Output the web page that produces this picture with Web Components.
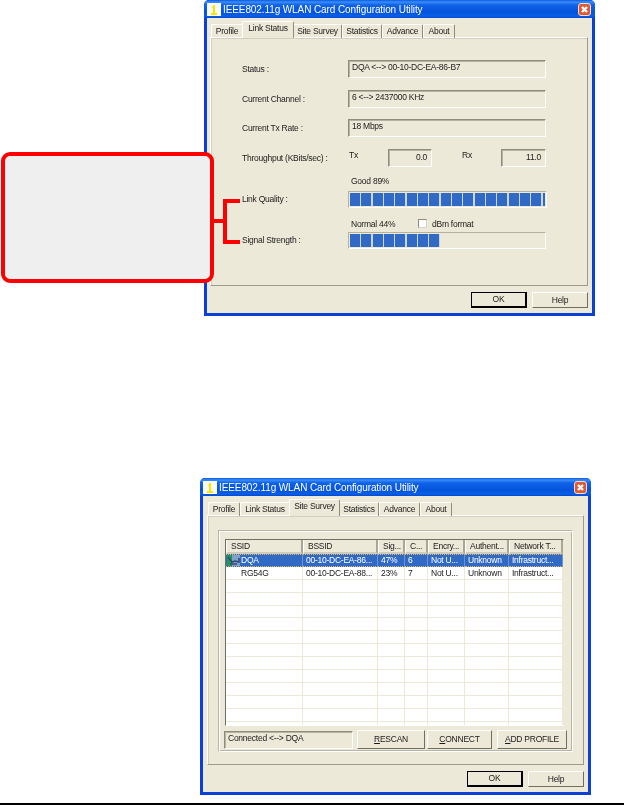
<!DOCTYPE html>
<html>
<head>
<meta charset="utf-8">
<title>WLAN utility</title>
<style>
  html, body { margin: 0; background: #fff; }
  body { width: 624px; height: 805px; position: relative; overflow: hidden; font: 8.5px "Liberation Sans", sans-serif; letter-spacing: -.25px; color: #1c1c1c; }
  xp-window.link { position: absolute; left: 204px; top: 0; width: 391px; height: 316px; --pl: 3px; }
  xp-window.survey { position: absolute; left: 200px; top: 478px; width: 391px; height: 317px; --pl: 4px; }
  call-out { position: absolute; left: 1px; top: 152px; }
  page-rule { position: absolute; left: 0; right: 0; top: 803px; }
</style>
</head>
<body>

<xp-window class="link" active="1">
  <link-status></link-status>
</xp-window>

<call-out></call-out>

<xp-window class="survey" active="2">
  <site-survey></site-survey>
</xp-window>

<page-rule></page-rule>

<template id="xp-window-tpl">
<style>
  :host { display: block; box-sizing: border-box; filter: blur(.3px); }
  .frame { height: 100%; box-sizing: border-box; display: flex; flex-direction: column; background: #0a3fd8; border-radius: 5px 5px 0 0; padding: 0 3px 3px; }
  .title { height: 18px; margin: 0 -3px; padding: 0 4px 0 3px; flex: none; display: flex; align-items: center; gap: 2px; color: #fff; border-radius: 5px 5px 0 0;
    background: linear-gradient(#0a5be0 0, #3b8cf8 2px, #0f62e8 5px, #0553dc 12px, #0a5fe6 16px, #0048d0 18px);
    font: 10px "Liberation Sans", sans-serif; letter-spacing: -.1px; }
  .title svg { flex: none; }
  .title span { flex: 1; white-space: nowrap; margin-top: 1px; }
  .client { flex: 1; min-height: 0; background: #ece9d8; display: flex; flex-direction: column; padding: 5px 4px 5px var(--pl); }
  .panel { flex: 1; min-height: 0; box-sizing: border-box; border: 1px solid; border-color: #fff #9d9a8a #9d9a8a #fff; box-shadow: 1px 1px 0 #d2cfbe inset; }
  .foot { flex: none; display: flex; justify-content: flex-end; gap: 5px; padding-top: 6px; }
</style>
<div class="frame">
  <div class="title">
    <svg width="14" height="13" viewBox="0 0 14 13"><rect width="14" height="13" fill="#fbfbf4"/><path d="M6 2h2v8h2v2H4v-2h2V5H5V4h1z" fill="#f7e600"/></svg>
    <span>IEEE802.11g WLAN Card Configuration Utility</span>
    <svg width="13" height="13" viewBox="0 0 13 13"><rect x=".5" y=".5" width="12" height="12" rx="2.5" fill="#dc5a35" stroke="#f3dcd2"/><path d="M4 4l5 5M9 4l-5 5" stroke="#fff" stroke-width="2.4"/></svg>
  </div>
  <div class="client">
    <xp-tabs></xp-tabs>
    <div class="panel"><slot></slot></div>
    <div class="foot">
      <xp-button def w="56">OK</xp-button>
      <xp-button w="56">Help</xp-button>
    </div>
  </div>
</div>
</template>

<template id="xp-tabs-tpl">
<style>
  :host { display: flex; height: 15px; flex: none; align-items: flex-end; padding-left: 1px; position: relative; z-index: 1; margin-bottom: -1px; }
  .tab { box-sizing: border-box; height: 14px; text-align: center; line-height: 12px; white-space: nowrap; border: 1px solid; border-color: #fff #8f8c7c transparent #fff; border-bottom: 0; border-radius: 2px 2px 0 0; }
  .tab.on { height: 17px; margin: 0 -1px; background: #ece9d8; line-height: 13px; padding-bottom: 3px; position: relative; z-index: 1; }
</style>
</template>

<template id="xp-button-tpl">
<style>
  :host { display: block; box-sizing: border-box; height: 16px; background: #ece9d8; border: 1px solid; border-color: #fff #716f64 #716f64 #fff; text-align: center; line-height: 14px; white-space: nowrap; flex: none; }
  :host([def]) { border: 1px solid #000; border-right-width: 2px; border-bottom-width: 2px; line-height: 13px; }
  :host([tall]) { height: 19px; line-height: 17px; }
</style>
<slot></slot>
</template>

<template id="sunken-box-tpl">
<style>
  :host { display: block; box-sizing: border-box; height: 18px; border: 1px solid; border-color: #8f8c7c #fff #fff #8f8c7c; box-shadow: 1px 1px 0 #b6b3a3 inset; padding: 0 3px; line-height: 12px; white-space: nowrap; }
  :host([num]) { text-align: right; padding-right: 4px; line-height: 15px; }
</style>
<slot></slot>
</template>

<template id="chunk-bar-tpl">
<style>
  :host { display: block; box-sizing: border-box; height: 17px; padding: 1px; border: 1px solid; border-color: #b4b1a1 #fff #fff #b4b1a1; }
  .fill { height: 100%; background: repeating-linear-gradient(90deg, #316ac5 0 10px, #cdd5e0 10px 11.33px); }
</style>
<div class="fill"></div>
</template>

<template id="link-status-tpl">
<style>
  :host { display: block; padding: 22px 41px 0 31px; }
  .top { display: flex; flex-direction: column; gap: 11.5px; }
  .row { display: grid; grid-template-columns: 106px 1fr; align-items: center; height: 18px; white-space: nowrap; }
  .tp { display: grid; grid-template-columns: 40px 44px 29px 40px 45px; }
  .tp span { line-height: 12px; padding-left: 1px; }
  .cap { margin-left: 109px; height: 11px; line-height: 11px; }
  .cap.first { margin-top: 9px; margin-bottom: 4px; }
  .cap.second { margin-top: 11px; margin-bottom: 2px; display: flex; }
  .cap i { font-style: normal; width: 67px; }
  .box { width: 9px; height: 9px; box-sizing: border-box; background: #fff; border: 1px solid; border-color: #8f8c7c #d8d5c6 #d8d5c6 #8f8c7c; margin-right: 5px; }
  .bar { display: grid; grid-template-columns: 106px 1fr; align-items: center; height: 17px; }
</style>
<div class="top">
  <div class="row"><span>Status :</span><sunken-box>DQA &lt;--&gt; 00-10-DC-EA-86-B7</sunken-box></div>
  <div class="row"><span>Current Channel :</span><sunken-box>6 &lt;--&gt; 2437000 KHz</sunken-box></div>
  <div class="row"><span>Current Tx Rate :</span><sunken-box>18 Mbps</sunken-box></div>
  <div class="row"><span>Throughput (KBits/sec) :</span>
    <div class="tp"><span>Tx</span><sunken-box num>0.0</sunken-box><span></span><span>Rx</span><sunken-box num>11.0</sunken-box></div>
  </div>
</div>
<div class="cap first">Good 89%</div>
<div class="bar"><span>Link Quality :</span><chunk-bar value="195"></chunk-bar></div>
<div class="cap second"><i>Normal 44%</i><div class="box"></div><span>dBm format</span></div>
<div class="bar"><span>Signal Strength :</span><chunk-bar value="90.4"></chunk-bar></div>
</template>

<template id="site-survey-tpl">
<style>
  :host { display: block; height: 100%; box-sizing: border-box; padding: 14px 10px 12px 10px; }
  .group { height: 100%; box-sizing: border-box; border: 1px solid; border-color: #b8b5a5 #fff #fff #b8b5a5; box-shadow: 1px 1px 0 #fff inset, -1px -1px 0 #b8b5a5 inset; padding: 8px 8px 2px 6px; display: flex; flex-direction: column; gap: 4px; }
  .acts { display: flex; height: 19px; flex: none; margin: 0 -3px 0 -1px; }
  .acts sunken-box { width: 129px; height: 18px; margin-top: 1px; margin-right: 4px; flex: none; }
  .acts .second { margin-left: 2px; }
  .acts .third { margin-left: 5px; }
</style>
<div class="group">
  <survey-list></survey-list>
  <div class="acts">
    <sunken-box>Connected &lt;--&gt; DQA</sunken-box>
    <xp-button tall w="68"><u>R</u>ESCAN</xp-button>
    <xp-button tall class="second" w="65"><u>C</u>ONNECT</xp-button>
    <xp-button tall class="third" w="70"><u>A</u>DD PROFILE</xp-button>
  </div>
</div>
</template>

<template id="survey-list-tpl">
<style>
  :host { display: block; flex: 1; min-height: 0; box-sizing: border-box; background: #fff; border: 1px solid; border-color: #716f64 #ece9d8 #fff #716f64; overflow: hidden; }
  .grid { display: grid; grid-template-columns: 77px 75px 27px 23px 37px 44px 54px; }
  .head { display: contents; }
  .head div { height: 14px; box-sizing: border-box; background: #ece9d8; border-right: 2px solid #a9a696; border-left: 1px solid #fff; border-bottom: 2px solid #cfccbc; line-height: 12px; padding-left: 4px; white-space: nowrap; overflow: hidden; }
  .cell { height: 12.9px; box-sizing: border-box; border-right: 1px solid #ece9d8; border-bottom: 1px solid #ece9d8; line-height: 12px; padding-left: 3px; white-space: nowrap; overflow: hidden; display: flex; align-items: center; }
  .cell.sel { background: #316ac5; color: #fff; border-right-color: #6e93cf; border-top: 1px dotted #d9b86a; border-bottom: 1px dotted #d9b86a; }
  .ssid { padding-left: 15px; position: relative; }
  svg { position: absolute; left: 1px; top: 0; }
</style>
<div class="grid"></div>
</template>

<template id="call-out-tpl">
<style>
  :host { display: block; width: 240px; height: 131px; position: relative; }
  .card { position: absolute; left: 0; top: 0; width: 213px; height: 131px; box-sizing: border-box; background: #efefef; border: 4px solid #fe0000; border-radius: 9px; }
  .wire { position: absolute; background: #fe0000; }
</style>
<div class="card"></div>
<div class="wire" style="left:212px;top:67px;width:12px;height:4px"></div>
<div class="wire" style="left:222px;top:47px;width:4px;height:45px"></div>
<div class="wire" style="left:222px;top:47px;width:17px;height:4px"></div>
<div class="wire" style="left:222px;top:88px;width:17px;height:4px"></div>
</template>

<script>
  function shadow(el, id) {
    const root = el.attachShadow({ mode: 'open' });
    root.appendChild(document.getElementById(id).content.cloneNode(true));
    return root;
  }

  class XpWindow extends HTMLElement {
    constructor() {
      super();
      const root = shadow(this, 'xp-window-tpl');
      root.querySelector('xp-tabs').setAttribute('active', this.getAttribute('active'));
    }
  }

  const TABS = [['Profile', 32], ['Link Status', 50], ['Site Survey', 49], ['Statistics', 40], ['Advance', 41], ['About', 32]];

  class XpTabs extends HTMLElement {
    constructor() {
      super();
      this.root = shadow(this, 'xp-tabs-tpl');
    }
    connectedCallback() {
      const active = +this.getAttribute('active');
      this.root.querySelectorAll('.tab').forEach(t => t.remove());
      TABS.forEach(([name, w], i) => {
        const t = document.createElement('div');
        t.className = i === active ? 'tab on' : 'tab';
        t.style.width = w + (i === active ? 2 : 0) + 'px';
        t.textContent = name;
        this.root.appendChild(t);
      });
    }
  }

  class XpButton extends HTMLElement {
    constructor() {
      super();
      shadow(this, 'xp-button-tpl');
      this.style.width = this.getAttribute('w') + 'px';
    }
  }

  class SunkenBox extends HTMLElement {
    constructor() { super(); shadow(this, 'sunken-box-tpl'); }
  }

  class ChunkBar extends HTMLElement {
    constructor() {
      super();
      const root = shadow(this, 'chunk-bar-tpl');
      root.querySelector('.fill').style.width = this.getAttribute('value') + 'px';
    }
  }

  class LinkStatus extends HTMLElement {
    constructor() { super(); shadow(this, 'link-status-tpl'); }
  }

  class SiteSurvey extends HTMLElement {
    constructor() { super(); shadow(this, 'site-survey-tpl'); }
  }

  const COLS = ['SSID', 'BSSID', 'Sig...', 'C...', 'Encry...', 'Authent...', 'Network T...'];
  const ROWS = [
    ['DQA', '00-10-DC-EA-86...', '47%', '6', 'Not U...', 'Unknown', 'Infrastruct...'],
    ['RG54G', '00-10-DC-EA-88...', '23%', '7', 'Not U...', 'Unknown', 'Infrastruct...']
  ];
  const LINK_ICON = '<svg width="13" height="11" viewBox="0 0 13 11"><rect width="5" height="11" fill="#1f9a4a"/><rect x="5" width="8" height="11" fill="#7fa0c8"/><path d="M1 2l4 5 3-1 4 1V3M3 9h7" stroke="#33487a" stroke-width="1.6" fill="none"/></svg>';

  class SurveyList extends HTMLElement {
    constructor() {
      super();
      const root = shadow(this, 'survey-list-tpl');
      const grid = root.querySelector('.grid');
      let html = '<div class="head">' + COLS.map(c => `<div>${c}</div>`).join('') + '</div>';
      for (let r = 0; r < 14; r++) {
        const row = ROWS[r] || COLS.map(() => '');
        html += row.map((txt, c) => {
          const cls = ['cell'];
          if (c === 0) cls.push('ssid');
          if (r === 0) cls.push('sel');
          const icon = r === 0 && c === 0 ? LINK_ICON : '';
          return `<div class="${cls.join(' ')}">${icon}${txt}</div>`;
        }).join('');
      }
      grid.innerHTML = html;
    }
  }

  class CallOut extends HTMLElement {
    constructor() { super(); shadow(this, 'call-out-tpl'); }
  }

  class PageRule extends HTMLElement {
    constructor() {
      super();
      this.attachShadow({ mode: 'open' }).innerHTML = '<style>:host{display:block;height:2px;background:#000}</style>';
    }
  }

  customElements.define('xp-window', XpWindow);
  customElements.define('xp-tabs', XpTabs);
  customElements.define('xp-button', XpButton);
  customElements.define('sunken-box', SunkenBox);
  customElements.define('chunk-bar', ChunkBar);
  customElements.define('link-status', LinkStatus);
  customElements.define('site-survey', SiteSurvey);
  customElements.define('survey-list', SurveyList);
  customElements.define('call-out', CallOut);
  customElements.define('page-rule', PageRule);
</script>
</body>
</html>
